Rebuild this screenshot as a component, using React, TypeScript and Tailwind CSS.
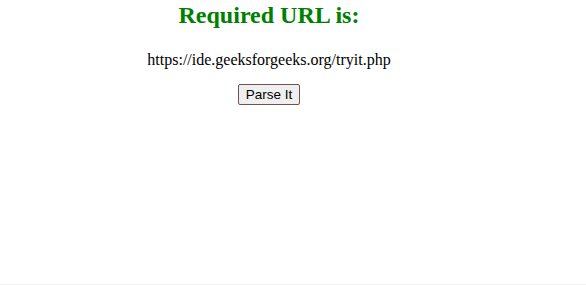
export default function App() {
  return (
    <div className="h-[285px] w-[586px] bg-white flex flex-col border-b border-[#f0f0f0]" style={{ fontFamily: '"Liberation Serif", "Times New Roman", serif' }}>
      <div className="w-[538px] text-center pt-[2px]">
        <h2 className="text-[24px] leading-[27px] font-bold text-[#008000] m-0">Required URL is:</h2>
        <p className="text-[16px] leading-[18px] text-black mt-[22px]">https://ide.geeksforgeeks.org/tryit.php</p>
        <div className="mt-[15px] flex justify-center">
          <button
            className="h-[21px] px-[7px] border border-[#6d5450] rounded-[2px] bg-[#efefef] text-[13.5px] leading-[16px] text-black"
            style={{ fontFamily: '"Liberation Sans", Arial, sans-serif' }}
          >
            Parse It
          </button>
        </div>
      </div>
    </div>
  );
}
